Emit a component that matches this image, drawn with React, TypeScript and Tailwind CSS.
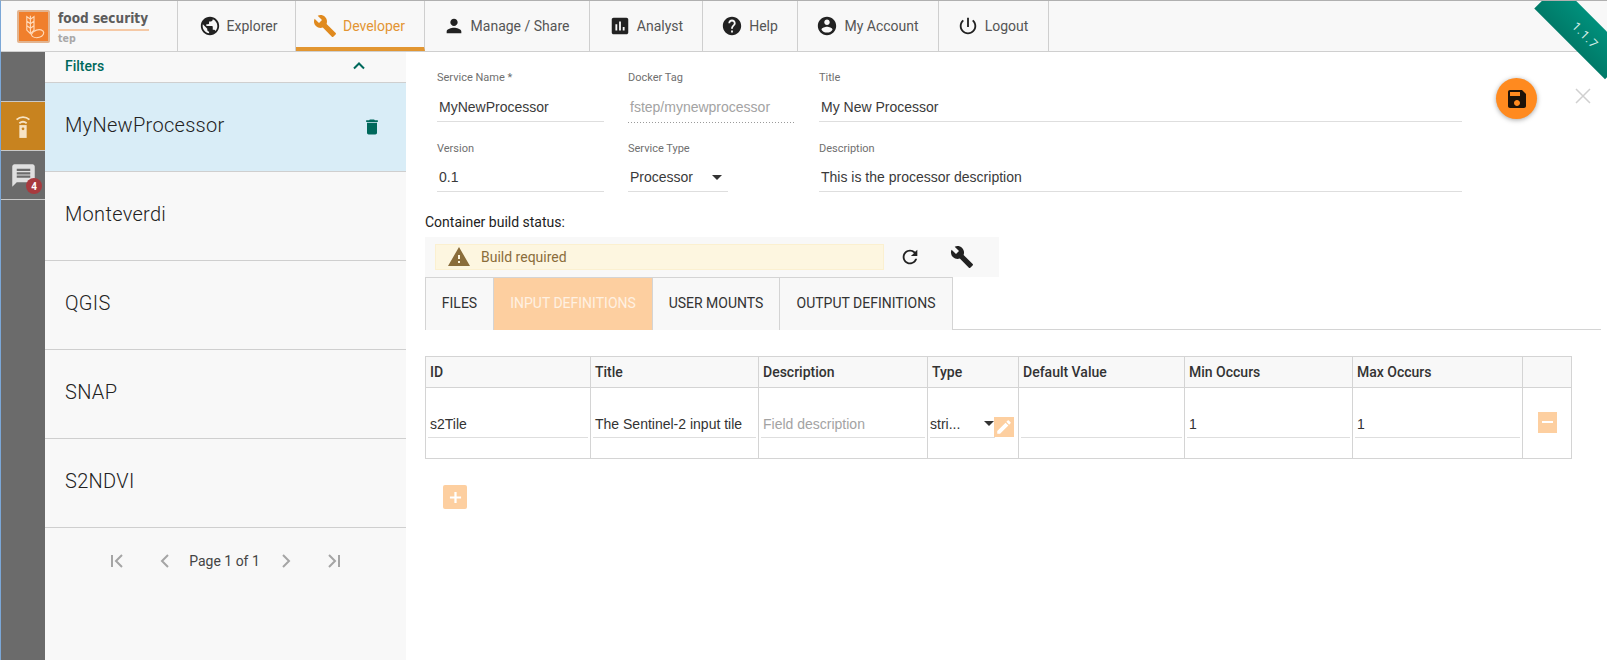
import type { ReactNode } from "react"

const paths = {
  public:
    "M12 2C6.48 2 2 6.48 2 12s4.48 10 10 10 10-4.48 10-10S17.52 2 12 2zm-1 17.93c-3.95-.49-7-3.85-7-7.93 0-.62.08-1.21.21-1.79L9 15v1c0 1.1.9 2 2 2v1.93zm6.9-2.54c-.26-.81-1-1.39-1.9-1.39h-1v-3c0-.55-.45-1-1-1H8v-2h2c.55 0 1-.45 1-1V7h2c1.1 0 2-.9 2-2v-.41c2.93 1.19 5 4.06 5 7.41 0 2.08-.8 3.97-2.1 5.39z",
  build:
    "M22.7 19l-9.1-9.1c.9-2.3.4-5-1.5-6.9-2-2-5-2.4-7.4-1.3L9 6 6 9 1.6 4.7C.4 7.1.9 10.1 2.9 12.1c1.9 1.9 4.6 2.4 6.9 1.5l9.1 9.1c.4.4 1 .4 1.4 0l2.3-2.3c.5-.4.5-1.1.1-1.4z",
  person: "M12 12c2.21 0 4-1.79 4-4s-1.79-4-4-4-4 1.79-4 4 1.79 4 4 4zm0 2c-2.67 0-8 1.34-8 4v2h16v-2c0-2.66-5.33-4-8-4z",
  assessment:
    "M19 3H5c-1.1 0-2 .9-2 2v14c0 1.1.9 2 2 2h14c1.1 0 2-.9 2-2V5c0-1.1-.9-2-2-2zM9 17H7v-7h2v7zm4 0h-2V7h2v10zm4 0h-2v-4h2v4z",
  help: "M12 2C6.48 2 2 6.48 2 12s4.48 10 10 10 10-4.48 10-10S17.52 2 12 2zm1 17h-2v-2h2v2zm2.07-7.75l-.9.92C13.45 12.9 13 13.5 13 15h-2v-.5c0-1.1.45-2.1 1.17-2.83l1.24-1.26c.37-.36.59-.86.59-1.41 0-1.1-.9-2-2-2s-2 .9-2 2H8c0-2.21 1.79-4 4-4s4 1.79 4 4c0 .88-.36 1.68-.93 2.25z",
  account:
    "M12 2C6.48 2 2 6.48 2 12s4.48 10 10 10 10-4.48 10-10S17.52 2 12 2zm0 3c1.66 0 3 1.34 3 3s-1.34 3-3 3-3-1.34-3-3 1.34-3 3-3zm0 14.2c-2.5 0-4.71-1.28-6-3.22.03-1.99 4-3.08 6-3.08 1.99 0 5.97 1.09 6 3.08-1.29 1.94-3.5 3.22-6 3.22z",
  power:
    "M13 3h-2v10h2V3zm4.83 2.17l-1.42 1.42C17.99 7.86 19 9.81 19 12c0 3.87-3.13 7-7 7s-7-3.13-7-7c0-2.19 1.01-4.14 2.58-5.42L6.17 5.17C4.23 6.82 3 9.26 3 12c0 4.97 4.03 9 9 9s9-4.03 9-9c0-2.74-1.23-5.18-3.17-6.83z",
  delete: "M6 19c0 1.1.9 2 2 2h8c1.1 0 2-.9 2-2V7H6v12zM19 4h-3.5l-1-1h-5l-1 1H5v2h14V4z",
  save: "M17 3H5c-1.11 0-2 .9-2 2v14c0 1.1.89 2 2 2h14c1.1 0 2-.9 2-2V7l-4-4zm-5 16c-1.66 0-3-1.34-3-3s1.34-3 3-3 3 1.34 3 3-1.34 3-3 3zm3-10H5V5h10v4z",
  refresh:
    "M17.65 6.35C16.2 4.9 14.21 4 12 4c-4.42 0-7.99 3.58-7.99 8s3.57 8 7.99 8c3.73 0 6.84-2.55 7.73-6h-2.08c-.82 2.33-3.04 4-5.65 4-3.31 0-6-2.69-6-6s2.69-6 6-6c1.66 0 3.14.69 4.22 1.78L13 11h7V4l-2.35 2.35z",
  warning: "M1 21h22L12 2 1 21zm12-3h-2v-2h2v2zm0-4h-2v-4h2v4z",
  edit: "M3 17.25V21h3.75L17.81 9.94l-3.75-3.75L3 17.25zM20.71 7.04c.39-.39.39-1.02 0-1.41l-2.34-2.34c-.39-.39-1.02-.39-1.41 0l-1.83 1.83 3.75 3.75 1.83-1.83z",
  chat: "M20 2H4c-1.1 0-2 .9-2 2v18l4-4h14c1.1 0 2-.9 2-2V4c0-1.1-.9-2-2-2zM6 6h12v2H6V6zm0 3h12v2H6V9zm0 3h12v2H6v-2z",
}

function Icon({ d, className }: { d: string; className: string }) {
  return (
    <svg viewBox="0 0 24 24" fill="currentColor" fillRule="evenodd" className={className}>
      <path d={d} />
    </svg>
  )
}

const navItems = [
  { label: "Explorer", icon: paths.public, width: "w-[118px] pl-[3px]" },
  { label: "Developer", icon: paths.build, width: "w-[129px] pr-[2px]", active: true },
  { label: "Manage / Share", icon: paths.person, width: "w-[165px] pr-[2px]" },
  { label: "Analyst", icon: paths.assessment, width: "w-[113px]" },
  { label: "Help", icon: paths.help, width: "w-[95px] pr-[1px]" },
  { label: "My Account", icon: paths.account, width: "w-[141px] pr-[1px]" },
  { label: "Logout", icon: paths.power, width: "w-[110px] pr-[2px]" },
]

const services = ["MyNewProcessor", "Monteverdi", "QGIS", "SNAP", "S2NDVI"]

const columns = ["ID", "Title", "Description", "Type", "Default Value", "Min Occurs", "Max Occurs", ""]

function Logo() {
  return (
    <div className="flex w-[177px] shrink-0 items-center border-r border-[#cfcfcf] pl-[16px]">
      <div className="flex h-[33px] w-[33px] items-center justify-center rounded-[2px] border-2 border-[#e3b48f] bg-[#f07f2c]">
        <svg viewBox="0 0 28 30" className="h-[27px] w-[26px]" fill="none" stroke="#ffd9b8" strokeWidth="1.3">
          <path d="M10 3v20M10 7l-4-3v5l4 3 4-3V4zM10 12l-4-3v5l4 3 4-3V9zM10 17l-4-3v5l4 4 4-4v-5z" />
          <path d="M11 24c2-5 9-7 13-4 2 2 0 6-4 7-4 1-8 0-9-3z" />
        </svg>
      </div>
      <div className="ml-[8px] w-[91px] font-['DejaVu_Sans_Condensed','DejaVu_Sans'] font-bold">
        <div className="mt-[1px] h-[17px] text-[13.500px] leading-[17px] whitespace-nowrap text-[#5d5d5d]">food security</div>
        <div className="mt-[2px] h-[2px] bg-[#f5c9a6]" />
        <div className="mt-[1px] text-[10.500px] leading-[12px] text-[#a8a8a8]">tep</div>
      </div>
    </div>
  )
}

function Field({ label, value, width, muted, dotted, select, tall }: { label: string; value: string; width: string; muted?: boolean; dotted?: boolean; select?: boolean; tall?: boolean }) {
  return (
    <div className={`${width} shrink-0`}>
      <div className="h-[14px] font-['Roboto'] text-[11px] leading-[14px] text-[#6f6f6f]">{label}</div>
      <div
        className={`flex ${tall ? "h-[37px]" : "h-[36px]"} items-center justify-between pt-[8px] pl-[2px] font-['Liberation_Sans'] text-[14px] ${muted ? "text-[#a3a3a3]" : "text-[#3a3a3a]"} ${
          dotted ? "" : "border-b border-[#dedede]"
        }`}
      >
        {value}
        {select && <span className="mr-[6px] h-0 w-0 border-x-[5px] border-t-[5px] border-x-transparent border-t-[#333]" />}
      </div>
      {dotted && <div className="h-px bg-[repeating-linear-gradient(90deg,#9a9a9a_0_1px,transparent_1px_3px)]" />}
    </div>
  )
}

function CellInput({ value, muted, children }: { value?: string; muted?: boolean; children?: ReactNode }) {
  return (
    <div className="h-[70px] border-r border-[#d4d4d4] px-[2px]">
      <div className={`flex h-[50px] items-end border-b border-[#dedede] pb-[4px] pl-[2px] font-['Liberation_Sans'] text-[14px] leading-[18px] whitespace-nowrap ${muted ? "text-[#a3a3a3]" : "text-[#333]"}`}>
        {value}
        {children}
      </div>
    </div>
  )
}

export default function App() {
  return (
    <div className="relative flex h-[660px] w-full flex-col overflow-hidden border-t border-l border-t-[#b0b0b0] border-l-[#7ba7d7] bg-white font-['Roboto',sans-serif]">
      {/* Header */}
      <header className="flex h-[51px] shrink-0 border-b border-[#cfcfcf] bg-[#f8f8f8]">
        <Logo />
        {navItems.map((item) => (
          <div
            key={item.label}
            className={`flex ${item.width} shrink-0 items-center justify-center gap-[6px] border-r border-[#cfcfcf] text-[14px] ${
              item.active ? "border-b-4 border-b-[#e29631] pt-[4px] text-[#e39533]" : "text-[#555]"
            }`}
          >
            <Icon d={item.icon} className={`${item.active ? "h-[24px] w-[24px] text-[#e08a1e]" : "h-[22px] w-[22px] text-[#222]"}`} />
            {item.label}
          </div>
        ))}
      </header>

      <div className="flex min-h-0 flex-1">
        {/* Dark rail */}
        <div className="w-[44px] shrink-0 bg-[#6b6b6b] pt-[49px]">
          <div className="flex h-[50px] items-center justify-center border-y border-[#c9c9c9] bg-[#c8831f]">
            <svg viewBox="0 0 24 30" className="h-[28px] w-[22px]" fill="none" stroke="#f7e3c4" strokeWidth="2">
              <path d="M5 8c4-3.5 10-3.5 14 0M8 12c2.500-2 5.500-2 8 0" />
              <rect x="8" y="14" width="8" height="14" fill="#f7e3c4" stroke="none" />
              <circle cx="12" cy="18" r="1.500" fill="#c8831f" stroke="none" />
            </svg>
          </div>
          <div className="relative flex h-[49px] items-center justify-center border-b border-[#c9c9c9]">
            <Icon d={paths.chat} className="mt-[1px] h-[27px] w-[27px] text-[#e0e0e0]" />
            <span className="absolute top-[27px] left-[25px] flex h-[16px] w-[16px] items-center justify-center rounded-full bg-[#a83a3e] text-[10px] font-bold text-white">4</span>
          </div>
        </div>

        {/* Service list */}
        <aside className="flex w-[361px] shrink-0 flex-col bg-[#f8f8f8]">
          <div className="flex h-[31px] shrink-0 items-center justify-between border-b border-[#cfcfcf] pr-[37px] pb-[2px] pl-[20px] text-[14px] font-medium text-[#00695c]">
            Filters
            <svg viewBox="0 0 24 24" className="h-[20px] w-[20px]" fill="none" stroke="#00695c" strokeWidth="2.400">
              <path d="M6 15l6-6 6 6" />
            </svg>
          </div>
          {services.map((name, i) => (
            <div
              key={name}
              className={`flex h-[89px] shrink-0 items-center justify-between border-b border-[#cfcfcf] pr-[24px] pl-[20px] text-[20px] font-light tracking-[0.3px] text-[#222] ${
                i === 0 ? "bg-[#d9edf7]" : ""
              }`}
            >
              <span className="mb-[4px]">{name}</span>
              {i === 0 && <Icon d={paths.delete} className="h-[20px] w-[20px] text-[#00695c]" />}
            </div>
          ))}
          <div className="mt-[21px] flex items-center justify-center text-[14px] text-[#444]">
            <div className="flex items-center gap-[24px] text-[#a5a5a5]">
              <svg viewBox="0 0 24 24" className="h-[24px] w-[24px]" fill="none" stroke="currentColor" strokeWidth="2">
                <path d="M7 6v12M17 6l-6 6 6 6" />
              </svg>
              <svg viewBox="0 0 24 24" className="h-[24px] w-[24px]" fill="none" stroke="currentColor" strokeWidth="2">
                <path d="M15 6l-6 6 6 6" />
              </svg>
            </div>
            <span className="mr-[14px] ml-[12px]">Page 1 of 1</span>
            <div className="flex items-center gap-[24px] text-[#a5a5a5]">
              <svg viewBox="0 0 24 24" className="h-[24px] w-[24px]" fill="none" stroke="currentColor" strokeWidth="2">
                <path d="M9 6l6 6-6 6" />
              </svg>
              <svg viewBox="0 0 24 24" className="h-[24px] w-[24px]" fill="none" stroke="currentColor" strokeWidth="2">
                <path d="M7 6l6 6-6 6M17 6v12" />
              </svg>
            </div>
          </div>
        </aside>

        {/* Main form */}
        <main className="min-w-0 flex-1 pt-[19px] pl-[19px]">
          <div className="flex">
            <div className="w-[1040px] shrink-0 pl-[12px]">
              <div className="flex gap-[24px]">
                <Field label="Service Name *" value="MyNewProcessor" width="w-[167px]" tall />
                <Field label="Docker Tag" value="fstep/mynewprocessor" width="w-[167px]" muted dotted tall />
                <Field label="Title" value="My New Processor" width="w-[643px]" tall />
              </div>
              <div className="mt-[19px] flex gap-[24px]">
                <Field label="Version" value="0.1" width="w-[167px]" />
                <div className="flex w-[167px] shrink-0">
                  <Field label="Service Type" value="Processor" width="w-[100px]" select />
                </div>
                <Field label="Description" value="This is the processor description" width="w-[643px]" />
              </div>
            </div>
            <button className="mt-[7px] ml-[31px] flex h-[41px] w-[41px] shrink-0 items-center justify-center rounded-full bg-[#ff8a1f] shadow-[0_1px_5px_rgba(0,0,0,0.35)]">
              <Icon d={paths.save} className="h-[24px] w-[24px] text-[#1d1208]" />
            </button>
            <svg viewBox="0 0 16 16" className="mt-[17px] ml-[38px] h-[16px] w-[16px] shrink-0" fill="none" stroke="#d0d0d0" strokeWidth="1.500">
              <path d="M1 1l14 14M15 1L1 15" />
            </svg>
          </div>

          <div className="mt-[21px] h-[18px] text-[14px] leading-[18px] text-[#222]">Container build status:</div>

          <div className="mt-[6px] flex h-[40px] w-[574px] items-center bg-[#f8f8f8] pl-[10px]">
            <div className="flex h-[26px] w-[449px] items-center border border-[#fbf0d0] bg-[#fdf6e0] pl-[11px] text-[14px] text-[#8a6d3b]">
              <Icon d={paths.warning} className="h-[24px] w-[24px] text-[#8a6d3b]" />
              <span className="ml-[10px]">Build required</span>
            </div>
            <Icon d={paths.refresh} className="ml-[15px] h-[22px] w-[22px] text-[#222]" />
            <Icon d={paths.build} className="ml-[29px] h-[24px] w-[24px] text-[#222]" />
          </div>

          <div className="mr-[6px] flex h-[53px] border-b border-[#d4d4d4]">
            {[
              { label: "FILES", width: "w-[69px]" },
              { label: "INPUT DEFINITIONS", width: "w-[159px]", active: true },
              { label: "USER MOUNTS", width: "w-[127px]" },
              { label: "OUTPUT DEFINITIONS", width: "w-[173px]" },
            ].map((tab) => (
              <div
                key={tab.label}
                className={`flex ${tab.width} h-[53px] items-center justify-center border-t border-r border-[#d4d4d4] pb-[2px] text-[14px] first:border-l ${
                  tab.active ? "bg-[#fdcfa0] text-[#fff1e2]" : "bg-[#f8f8f8] text-[#333]"
                }`}
              >
                {tab.label}
              </div>
            ))}
          </div>

          {/* Input definitions table */}
          <div className="mt-[26px] w-[1147px] border-t border-b border-l border-[#d4d4d4]">
            <div className="grid grid-cols-[165px_168px_169px_91px_166px_168px_170px_49px] border-b border-[#d4d4d4] bg-[#f8f8f8]">
              {columns.map((col) => (
                <div key={col || "actions"} className="flex h-[30px] items-center border-r border-[#d4d4d4] pl-[4px] text-[14px] font-medium text-[#333]">
                  {col}
                </div>
              ))}
            </div>
            <div className="grid grid-cols-[165px_168px_169px_91px_166px_168px_170px_49px]">
              <CellInput value="s2Tile" />
              <CellInput value="The Sentinel-2 input tile" />
              <CellInput value="Field description" muted />
              <div className="relative h-[70px] border-r border-[#d4d4d4] pl-[2px]">
                <div className="flex h-[50px] w-[65px] items-end justify-between border-b border-[#dedede] pb-[4px] font-['Liberation_Sans'] text-[14px] leading-[18px] text-[#333]">
                  stri...
                  <span className="mr-[1px] mb-[7px] h-0 w-0 border-x-[5px] border-t-[5px] border-x-transparent border-t-[#333]" />
                </div>
                <span className="absolute top-[29px] left-[66px] flex h-[20px] w-[20px] items-center justify-center bg-[#fdcfa0]">
                  <Icon d={paths.edit} className="h-[18px] w-[18px] text-white" />
                </span>
              </div>
              <CellInput />
              <CellInput value="1" />
              <CellInput value="1" />
              <div className="flex h-[70px] items-center justify-center border-r border-[#d4d4d4] pb-[2px]">
                <span className="flex h-[21px] w-[19px] items-center justify-center bg-[#fdcfa0]">
                  <span className="h-[2px] w-[11px] bg-white" />
                </span>
              </div>
            </div>
          </div>

          <div className="mt-[26px] ml-[18px] flex h-[24px] w-[24px] items-center justify-center rounded-[2px] bg-[#fdcfa0]">
            <svg viewBox="0 0 14 14" className="h-[13px] w-[13px]" fill="none" stroke="white" strokeWidth="2.400">
              <path d="M7 1v12M1 7h12" />
            </svg>
          </div>
        </main>
      </div>

      {/* Version ribbon */}
      <div className="absolute top-0 right-0 h-[80px] w-[80px] overflow-hidden">
        <div className="absolute top-[13px] left-[5px] flex h-[35px] w-[100px] rotate-45 items-center justify-center bg-gradient-to-b from-[#00907c] to-[#007a68] pl-[10px] text-[12px] tracking-[1px] text-[#d8efe9]">
          1.1.7
        </div>
      </div>
    </div>
  )
}
